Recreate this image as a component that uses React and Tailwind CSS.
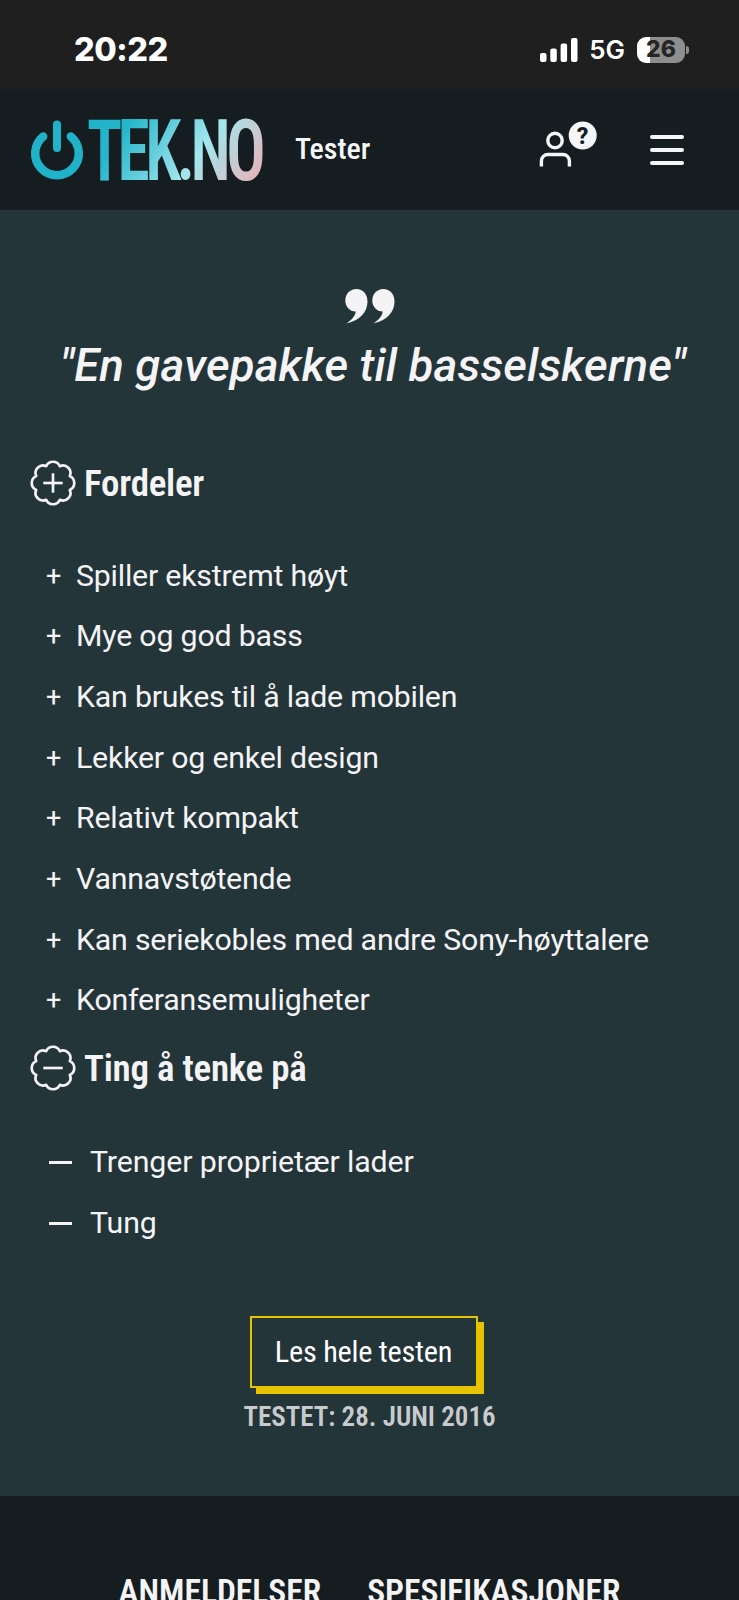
import React from 'react';

const pros = [
  'Spiller ekstremt høyt',
  'Mye og god bass',
  'Kan brukes til å lade mobilen',
  'Lekker og enkel design',
  'Relativt kompakt',
  'Vannavstøtende',
  'Kan seriekobles med andre Sony-høyttalere',
  'Konferansemuligheter',
];

const cons = ['Trenger proprietær lader', 'Tung'];

const condensed = "font-['Roboto_Condensed','Roboto',sans-serif] [font-stretch:75%]";

function StatusBar() {
  return (
    <div className="h-[89px] shrink-0 bg-[#1f1f1f] flex items-center justify-between pl-[74px] pr-[50px] pt-[10px] font-['Inter',sans-serif] text-white">
      <span className="pt-[1px] text-[32.5px] leading-none font-extrabold tracking-[-0.5px]">20:22</span>
      <div className="flex items-center">
        <svg width="38" height="24" viewBox="0 0 38 24" fill="currentColor">
          <rect x="0" y="15" width="6.5" height="9" rx="2" />
          <rect x="10.3" y="10.5" width="6.5" height="13.5" rx="2" />
          <rect x="20.6" y="5.5" width="6.5" height="18.5" rx="2" />
          <rect x="31" y="0" width="6.5" height="24" rx="2" />
        </svg>
        <span className="ml-[11px] pt-[1px] text-[26px] leading-none font-semibold">5G</span>
        <div className="ml-3 w-12 h-[26px] rounded-[9px] overflow-hidden bg-[linear-gradient(90deg,#fff_27%,#8e8e8e_27%)] flex items-center justify-center">
          <span className="text-[23px] leading-none font-extrabold text-[#252525]">26</span>
        </div>
        <div className="ml-[1px] w-[3px] h-2 rounded-r-full bg-[#8e8e8e]" />
      </div>
    </div>
  );
}

function Logo() {
  return (
    <svg width="236" height="64" viewBox="0 0 236 64" className="shrink-0 overflow-visible">
      <defs>
        <linearGradient id="tek" gradientUnits="userSpaceOnUse" x1="0" y1="-60" x2="157" y2="81">
          <stop offset="0" stopColor="#1fb2c9" />
          <stop offset="0.2" stopColor="#26b6cb" />
          <stop offset="0.62" stopColor="#a3e6ee" />
          <stop offset="0.95" stopColor="#e2b6bd" />
        </linearGradient>
      </defs>
      <g fill="none" stroke="#1fb2c9" strokeLinecap="round">
        <path d="M27 6.500V30" strokeWidth="8" />
        <path d="M13.200 18.500A21.800 21.800 0 1 0 40.800 18.500" strokeWidth="8.500" />
      </g>
      <text
        transform="translate(57 62.300) scale(.77 1)"
        fontSize="85"
        letterSpacing="-6"
        fill="url(#tek)"
        className="font-['Roboto_Condensed','Roboto',sans-serif] font-semibold"
      >
        TEK.NO
      </text>
    </svg>
  );
}

function Header() {
  return (
    <header className="h-[121px] shrink-0 bg-[#151d20] flex items-center pl-[30px] pr-[55px] text-[#f4f6f7]">
      <Logo />
      <span className={`ml-[29px] pb-[1px] text-[30px] leading-none font-medium ${condensed}`}>Tester</span>
      <div className="ml-auto flex items-center">
        <svg width="60" height="60" viewBox="0 0 60 60">
          <g fill="none" stroke="currentColor" strokeWidth="3.4">
            <circle cx="17" cy="20.500" r="7.2" />
            <path d="M3.400 46.500V41A6.500 6.500 0 0 1 9.900 34.500H24.900A6.500 6.500 0 0 1 31.400 41V46.500" />
          </g>
          <circle cx="44.700" cy="15.500" r="14" fill="currentColor" />
          <text x="44.500" y="23.500" textAnchor="middle" fontSize="23" fill="#151d20" className="font-['Roboto',sans-serif] font-extrabold">?</text>
        </svg>
        <div className="ml-[52px] pt-[1px] w-[34px] flex flex-col gap-[9px]">
          <div className="h-1 rounded-full bg-current" />
          <div className="h-1 rounded-full bg-current" />
          <div className="h-1 rounded-full bg-current" />
        </div>
      </div>
    </header>
  );
}

function Badge({ plus }) {
  return (
    <svg width="46" height="46" viewBox="0.5 0.5 45 45" fill="none" stroke="currentColor" strokeWidth="2.6" strokeLinejoin="round" className="shrink-0">
      <path d="M16.300 6.600A7.300 7.300 0 0 1 29.700 6.600A7.300 7.300 0 0 1 39.400 16.300A7.300 7.300 0 0 1 39.400 29.700A7.300 7.300 0 0 1 29.700 39.400A7.300 7.300 0 0 1 16.300 39.400A7.300 7.300 0 0 1 6.600 29.700A7.300 7.300 0 0 1 6.600 16.300A7.300 7.300 0 0 1 16.300 6.600Z" />
      <path d="M13.500 23H32.500" />
      {plus && <path d="M23 13.500V32.500" />}
    </svg>
  );
}

function SectionTitle({ plus, children }) {
  return (
    <h2 className={`h-[46px] flex items-center gap-2 text-[37px] leading-none font-semibold tracking-[-0.25px] ${condensed}`}>
      <Badge plus={plus} />
      <span className="pt-[1px]">{children}</span>
    </h2>
  );
}

export default function App() {
  return (
    <div className="w-full h-[1600px] overflow-hidden flex flex-col bg-[#151d20] font-['Roboto',sans-serif] text-[#f4f4f6]">
      <StatusBar />
      <Header />
      <main className="h-[1286px] shrink-0 bg-[#243539] px-[30px] flex flex-col">
        <svg width="50" height="36" viewBox="0 0 50 36" fill="currentColor" className="mt-[79px] mx-auto shrink-0">
          <path d="M11.300 0C18 0 22.500 5 22.500 12.500C22.500 23 15 31.500 1.500 34.500C7 30.500 10.200 27 10.700 22.500C4.500 22.500 .3 17.500 .3 11.500C.3 5 5 0 11.300 0Z" />
          <path d="M38.300 0C45 0 49.500 5 49.500 12.500C49.500 23 42 31.500 28.500 34.500C34 30.500 37.200 27 37.700 22.500C31.500 22.500 27.300 17.500 27.300 11.500C27.300 5 32 0 38.300 0Z" />
        </svg>
        <h1 className="mt-[14px] pl-[7px] text-center whitespace-nowrap text-[45.5px] leading-[54px] tracking-[0.15px] font-medium italic">
          "En gavepakke til basselskerne"
        </h1>
        <div className="mt-[67px]">
          <SectionTitle plus>Fordeler</SectionTitle>
        </div>
        <ul className="mt-[39.5px] pl-4 text-[30.3px] leading-[60.67px] tracking-[-0.2px] whitespace-nowrap">
          {pros.map((item) => (
            <li key={item} className="flex">
              <span className="w-[30px] text-[27px]">+</span>
              <span>{item}</span>
            </li>
          ))}
        </ul>
        <div className="mt-[14.5px]">
          <SectionTitle>Ting å tenke på</SectionTitle>
        </div>
        <ul className="mt-[41px] pl-[19px] text-[30.3px] leading-[60.67px] tracking-[-0.1px] whitespace-nowrap">
          {cons.map((item) => (
            <li key={item} className="flex items-center">
              <span className="w-[23px] h-[2.5px] mr-[18px] bg-current" />
              <span>{item}</span>
            </li>
          ))}
        </ul>
        <button className={`mt-[62px] ml-[219.5px] shrink-0 w-[228px] h-[72px] border-2 border-[#e6c200] bg-[#243539] shadow-[6px_6px_0_#e6c200] text-[30.3px] leading-none tracking-[-0.25px] text-white ${condensed}`}>
          Les hele testen
        </button>
        <p className={`mt-[13px] text-center text-[27px] leading-[32px] font-semibold text-[#c8cbcd] ${condensed}`}>
          TESTET: 28. JUNI 2016
        </p>
      </main>
      <nav className={`shrink-0 pt-[76px] flex justify-center gap-[46px] text-[33.5px] leading-[40px] font-semibold whitespace-nowrap ${condensed}`}>
        <span>ANMELDELSER</span>
        <span>SPESIFIKASJONER</span>
      </nav>
    </div>
  );
}
